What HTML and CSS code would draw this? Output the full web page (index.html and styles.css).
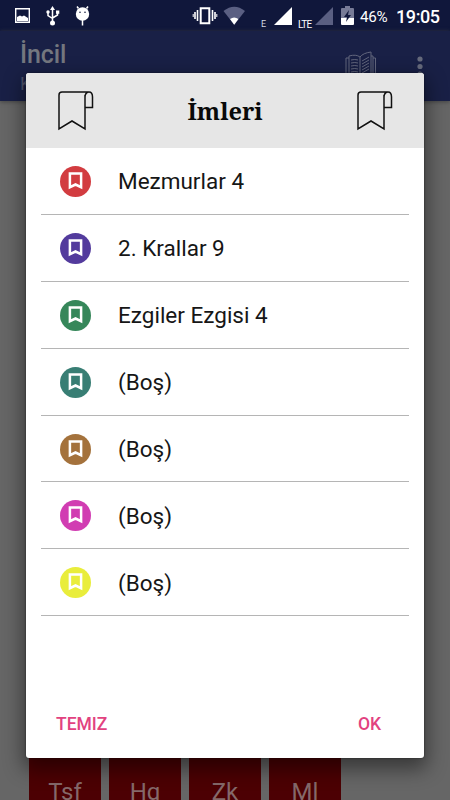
FILE: index.html
```html
<!DOCTYPE html>
<html lang="tr">
<head>
<meta charset="utf-8">
<title>İncil</title>
<link rel="stylesheet" href="styles.css">
</head>
<body>
<svg class="symbols" aria-hidden="true">
  <symbol id="ribbon" viewBox="0 0 37 42"><path d="M28 5v34L15 31 2 39V5q0-3 3-3H32q3.500 0 3.500 5v10.500H28M28 18V7q0-4 3.500-5" fill="none" stroke="#111" stroke-width="1.500"/></symbol>
  <symbol id="mark" viewBox="0 0 31 31"><circle cx="15.500" cy="15.500" r="15.500" fill="currentColor"/><path d="M9.900 7.400h11.200v13.800l-5.600-2.700-5.600 2.700z" fill="none" stroke="#fff" stroke-width="2.500"/></symbol>
</svg>
<div class="screen">
  <header class="status">
    <svg class="notifications" width="90" height="31" viewBox="0 0 90 31">
      <path d="M15.700 8.700h13.600v13.600H15.700z" fill="none" stroke="#fff" stroke-width="1.400"/><path d="M17 21v-4l3-1.500 2 1 2-1 4 2.500v3z" fill="#fff"/>
      <path d="M52.500 9v14M48 12v3.500l4.500 3M57.500 12v3l-5 3" fill="none" stroke="#fff" stroke-width="1.500"/><path d="M50 10l2.500-4 2.500 4z" fill="#fff"/><circle cx="52.500" cy="23" r="2.500" fill="#fff"/><circle cx="48" cy="12" r="1.700" fill="#fff"/><path d="M56 10.500h3.300v3.300H56z" fill="#fff"/>
      <path d="M78.500 8.500 77 6.500M86.500 8.500 88 6.500M82.500 20v5.500" stroke="#fff" stroke-width="1.500"/><circle cx="82.500" cy="14" r="6.700" fill="#fff"/><circle cx="80" cy="12.200" r=".8" fill="#11183a"/><circle cx="85" cy="12.200" r=".8" fill="#11183a"/>
    </svg>
    <svg class="radio" width="55" height="31" viewBox="0 0 55 31">
      <path d="M8.700 8.200h8.600v15H8.700z" fill="none" stroke="#fff" stroke-width="2"/><path d="M5.500 10v11M20.500 10v11M3 12v7M23 12v7" stroke="#fff" stroke-width="1.600"/><path d="M1.200 14v3M24.800 14v3" stroke="#fff"/>
      <path d="M31.500 11Q42.200 2.500 53 11L42.200 24.700z" fill="#5a5f82"/><path d="M38 19q4.200-3 8.400 0l-4.200 5.700z" fill="#fff"/>
    </svg>
    <span class="net edge">E</span>
    <svg class="signal" width="18" height="18" viewBox="0 0 18 18"><path d="M18 0v18H0z" fill="#fff"/></svg>
    <span class="net lte">LTE</span>
    <svg class="signal dim" width="18" height="18" viewBox="0 0 18 18"><path d="M18 0v18H0z" fill="#5a5f82"/></svg>
    <svg class="battery" width="13" height="19" viewBox="0 0 13 19"><path d="M4 0h5v2h3q1 0 1 1v9H0V3q0-1 1-1h3z" fill="#777b97"/><path d="M0 12h13v6q0 1-1 1H1q-1 0-1-1z" fill="#fff"/><path d="M8 4 3 11h3l-1 5 5-7H7z" fill="#11183c"/></svg>
    <span class="percent">46%</span>
    <span class="clock">19:05</span>
  </header>
  <div class="appbar">
    <div class="heading"><div class="app-name">İncil</div><div class="subtitle">Kutsal</div></div>
    <svg class="book" width="32" height="28" viewBox="0 0 32 28"><g fill="none" stroke="#62667d" stroke-width="1"><path d="M4 26V5q7-2 11 1v22M15 6Q18 2 26 1v24q-8 0-11 3M4 7H1v20h14M26 5h2v22M28 7h2.500v20M6 9q4-1 7 0M6 12q4-1 7 0M6 15q4-1 7 0M6 18q4-1 7 0M6 21q4-1 7 0M17 10l7-4M17 13l7-4M17 16l7-4M17 19l7-4M17 22l7-4"/></g></svg>
    <svg class="more" width="6" height="22" viewBox="0 0 6 22"><g fill="#666a7c"><circle cx="3" cy="3" r="2.600"/><circle cx="3" cy="10.500" r="2.600"/><circle cx="3" cy="18" r="2.600"/></g></svg>
  </div>
  <main class="page">
    <div class="tiles"><div class="tile">Tsf</div><div class="tile">Hg</div><div class="tile">Zk</div><div class="tile">Ml</div></div>
  </main>
</div>
<section class="dialog">
  <div class="dialog-head">
    <svg class="ribbon"><use href="#ribbon"/></svg>
    <h1>İmleri</h1>
    <svg class="ribbon"><use href="#ribbon"/></svg>
  </div>
  <ul class="list">
    <li><svg class="mark red"><use href="#mark"/></svg>Mezmurlar 4</li>
    <li><svg class="mark violet"><use href="#mark"/></svg>2. Krallar 9</li>
    <li><svg class="mark green"><use href="#mark"/></svg>Ezgiler Ezgisi 4</li>
    <li><svg class="mark teal"><use href="#mark"/></svg>(Boş)</li>
    <li><svg class="mark brown"><use href="#mark"/></svg>(Boş)</li>
    <li><svg class="mark magenta"><use href="#mark"/></svg>(Boş)</li>
    <li><svg class="mark yellow"><use href="#mark"/></svg>(Boş)</li>
  </ul>
  <div class="actions"><span>TEMIZ</span><span>OK</span></div>
</section>
</body>
</html>
```
FILE: styles.css
```css
* { box-sizing: border-box; }
body { margin: 0; width: 450px; height: 800px; overflow: hidden; font-family: Roboto, sans-serif; }
svg { display: block; flex: none; }
.symbols { position: absolute; width: 0; height: 0; }
.screen { display: flex; flex-direction: column; height: 800px; overflow: hidden; background: #666; }
.status { display: flex; flex: none; height: 31px; background: #10173b; color: #fff; white-space: nowrap; }
.radio { margin-left: 102px; }
.net { flex: none; line-height: 10px; font-size: 9px; color: #d5d7e2; }
.edge { width: 13px; margin: 19px 0 0 14px; }
.signal { margin-top: 7px; }
.lte { width: 15px; margin: 20px 0 0 6px; font-size: 10px; letter-spacing: -.8px; color: #fff; }
.dim { margin-left: 2px; }
.battery { margin: 6px 0 0 8px; }
.percent { flex: none; width: 36px; margin-left: 6px; font-size: 15.200px; line-height: 34px; letter-spacing: -.3px; }
.clock { font-size: 18px; font-weight: 500; line-height: 33px; letter-spacing: -.4px; }
.appbar { display: flex; flex: none; height: 70px; padding-left: 20px; background: #192046; box-shadow: 0 1px 4px #444; }
.heading { width: 324px; color: #74777f; }
.app-name { margin-top: 9px; font-size: 25px; line-height: 30px; font-weight: 500; letter-spacing: -.1px; }
.subtitle { margin-top: 4px; font-size: 18px; line-height: 20px; color: #4e536a; }
.book { margin: 20px 0 0 1px; }
.more { margin: 25px 0 0 40px; }
.page { display: flex; flex: 1; align-items: flex-end; }
.tiles { display: grid; grid-template-columns: repeat(4, 72px); gap: 8px; margin: 0 0 -19px 29px; }
.tile { height: 72px; padding-top: 31px; background: #4c0003; color: #85696a; font-size: 24px; line-height: 28px; text-align: center; }
.dialog { position: absolute; left: 26px; top: 73px; display: flex; flex-direction: column; width: 398px; height: 685px; overflow: hidden; border-radius: 3px; background: #fff; box-shadow: 0 8px 20px 3px rgba(0,0,0,.45), 0 0 2px rgba(0,0,0,.6); }
.dialog-head { display: flex; flex: none; justify-content: space-between; height: 75px; padding: 17px 31px 0; background: #e6e6e6; }
.ribbon { width: 37px; height: 42px; }
h1 { margin: 6px 0 0; font: bold 23.600px/30px "Noto Serif", "DejaVu Serif Condensed", "DejaVu Serif", serif; font-stretch: condensed; color: #090909; }
.list { flex: 1; margin: 0 15px; padding: 0; list-style: none; }
.list li { display: flex; align-items: center; height: 66.900px; padding-top: 1px; border-bottom: 1px solid #b5b5b5; font-size: 22.500px; line-height: 28px; color: #161616; }
.mark { width: 31px; height: 31px; margin: 0 27px 0 19px; }
.red { color: #d23c40; }
.violet { color: #533b9d; }
.green { color: #36875a; }
.teal { color: #387e74; }
.brown { color: #a4723c; }
.magenta { color: #d13db2; }
.yellow { color: #e9ed3c; }
.actions { display: flex; justify-content: space-between; height: 44px; padding: 0 43px 0 30px; font-size: 17.500px; line-height: 20px; font-weight: 500; color: #e2427f; }
```
